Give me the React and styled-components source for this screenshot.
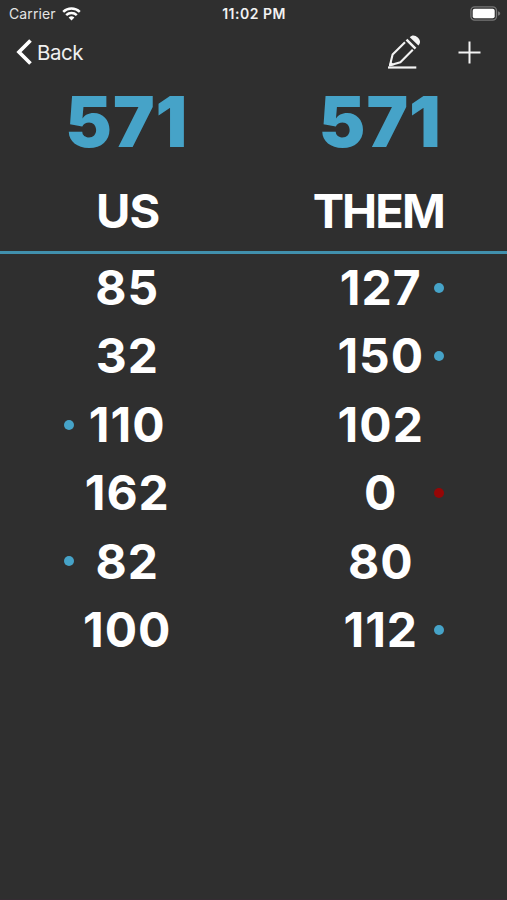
import styled, { createGlobalStyle } from 'styled-components';

const ACCENT = '#46a3c8';
const DANGER = '#960606';

const GlobalStyle = createGlobalStyle`
  * {
    box-sizing: border-box;
  }

  body {
    margin: 0;
    background: #2f2f2f;
    color: #fff;
    font-family: Inter, "Liberation Sans", sans-serif;
    -webkit-font-smoothing: antialiased;
  }
`;

const Screen = styled.div`
  display: flex;
  flex-direction: column;
  width: 507px;
  height: 900px;
  overflow: hidden;
  background: #2f2f2f;
  border-bottom: 1px solid #352c33;
`;

const StatusBar = styled.div`
  display: grid;
  grid-template-columns: 1fr auto 1fr;
  align-items: center;
  height: 27px;
  padding: 0 6px 0 9px;
`;

const Carrier = styled.div`
  display: flex;
  align-items: center;
  gap: 6px;
  color: #e4e4e4;
  font-size: 14px;
  letter-spacing: 0.1px;
`;

const Clock = styled.div`
  margin-left: -2px;
  color: #f2f2f2;
  font-size: 14px;
  font-weight: 600;
  letter-spacing: 0.5px;
`;

const Battery = styled.div`
  display: flex;
  justify-content: flex-end;
`;

const NavBar = styled.header`
  display: flex;
  align-items: center;
  justify-content: space-between;
  height: 50px;
  padding: 0 26px 0 16px;
`;

const BackButton = styled.button`
  display: flex;
  align-items: center;
  gap: 4px;
  padding: 0;
  border: 0;
  background: none;
  color: #f0f0f0;
  font-family: inherit;
  font-size: 20.5px;
  letter-spacing: -0.5px;
`;

const Actions = styled.div`
  display: flex;
  align-items: center;
  gap: 36px;
`;

const IconButton = styled.button`
  display: flex;
  padding: 0;
  border: 0;
  background: none;
  color: #f4f4f4;
`;

const Totals = styled.section`
  display: grid;
  grid-template-columns: 1fr 1fr;
  height: 174px;
  padding-top: 4px;
  text-align: center;
`;

const Total = styled.div`
  height: 82px;
  color: ${ACCENT};
  font-size: 70px;
  font-weight: 900;
  line-height: 82px;
  letter-spacing: 1px;
`;

const TeamName = styled.div`
  padding: ${({ $tight }) => ($tight ? '0 4px 0 0' : '0 0 0 2px')};
  font-size: 47px;
  font-weight: 700;
  line-height: 96px;
  letter-spacing: ${({ $tight }) => ($tight ? '-1.9px' : '-0.8px')};
`;

const Divider = styled.hr`
  width: 100%;
  height: 3px;
  margin: 0;
  border: 0;
  background: #4190ad;
`;

const Rounds = styled.main`
  display: flex;
  flex-direction: column;
`;

const Round = styled.div`
  display: grid;
  grid-template-columns: 1fr 1fr;
  height: 68.4px;
`;

const Score = styled.div`
  position: relative;
  padding-left: 1px;
  font-size: 48px;
  font-weight: 700;
  line-height: 68.5px;
  letter-spacing: 1px;
  text-align: center;
`;

// Marker sits on the outer side of the column it belongs to
const Marker = styled.span`
  position: absolute;
  top: 28.8px;
  ${({ $side }) => ($side === 'left' ? 'left: 64px;' : 'right: 63px;')}
  width: 10px;
  height: 10px;
  border-radius: 50%;
  background: ${({ $color }) => $color};
`;

const rounds = [
  { us: 85, them: 127, themMark: ACCENT },
  { us: 32, them: 150, themMark: ACCENT },
  { us: 110, them: 102, usMark: ACCENT },
  { us: 162, them: 0, themMark: DANGER },
  { us: 82, them: 80, usMark: ACCENT },
  { us: 100, them: 112, themMark: ACCENT },
];

function WifiIcon() {
  return (
    <svg width="19" height="14" viewBox="0 0 19 14" fill="none" stroke="#fff" strokeWidth="2.5">
      <path d="M1.2 4.8a12 12 0 0 1 16.6 0" />
      <path d="M4.2 8.1a7.7 7.7 0 0 1 10.6 0" />
      <path d="M9.5 13.5 6.6 10.6a4.2 4.2 0 0 1 5.8 0Z" fill="#fff" stroke="none" />
    </svg>
  );
}

function BatteryIcon() {
  return (
    <svg width="31" height="15" viewBox="0 0 31 15" fill="none">
      <rect x="0.9" y="0.9" width="25.6" height="13.2" rx="3.8" stroke="#777" strokeWidth="1.3" />
      <rect x="2.7" y="2.7" width="22" height="9.6" rx="2" fill="#fff" />
      <path d="M28 5.3v4.4c1.6-.6 2.2-1.3 2.2-2.2S29.6 5.9 28 5.3Z" fill="#777" />
    </svg>
  );
}

function ChevronIcon() {
  return (
    <svg width="17" height="26" viewBox="0 0 17 26" fill="none" stroke="#fff" strokeWidth="3.7">
      <path d="M14.5 1.5 3 13l11.5 11.5" />
    </svg>
  );
}

function PencilIcon() {
  return (
    <svg width="34" height="36" viewBox="0 0 34 36" fill="none" stroke="currentColor" strokeWidth="2.1">
      <path d="M17 8.2 4.6 20.6 2 31.3 12.4 28.2 24.8 15.8" strokeLinejoin="round" />
      <path d="M0.8 32.5 2.4 27.4 6.6 31Z" fill="currentColor" stroke="none" />
      <path d="m18.5 5.7 9 8.9" strokeWidth="2.5" />
      <path d="M21.8 3.2c2.3-2.6 5.4-2.2 8 .4s3.1 5.6.6 8Z" fill="currentColor" stroke="none" />
      <path d="M0 33.5h28.3" strokeWidth="2.2" />
    </svg>
  );
}

function PlusIcon() {
  return (
    <svg width="23" height="23" viewBox="0 0 23 23" fill="none" stroke="currentColor" strokeWidth="2">
      <path d="M11.5 0.5v22M0.5 11.5h22" />
    </svg>
  );
}

function App() {
  return (
    <>
      <GlobalStyle />
      <Screen>
        <StatusBar>
          <Carrier>
            Carrier
            <WifiIcon />
          </Carrier>
          <Clock>11:02 PM</Clock>
          <Battery>
            <BatteryIcon />
          </Battery>
        </StatusBar>

        <NavBar>
          <BackButton type="button">
            <ChevronIcon />
            Back
          </BackButton>
          <Actions>
            <IconButton type="button" aria-label="Edit">
              <PencilIcon />
            </IconButton>
            <IconButton type="button" aria-label="Add round">
              <PlusIcon />
            </IconButton>
          </Actions>
        </NavBar>

        <Totals>
          <div>
            <Total>571</Total>
            <TeamName>US</TeamName>
          </div>
          <div>
            <Total>571</Total>
            <TeamName $tight>THEM</TeamName>
          </div>
        </Totals>

        <Divider />

        <Rounds>
          {rounds.map((round, index) => (
            <Round key={index}>
              <Score>
                {round.usMark && <Marker $side="left" $color={round.usMark} />}
                {round.us}
              </Score>
              <Score>
                {round.them}
                {round.themMark && <Marker $side="right" $color={round.themMark} />}
              </Score>
            </Round>
          ))}
        </Rounds>
      </Screen>
    </>
  );
}

export default App;
